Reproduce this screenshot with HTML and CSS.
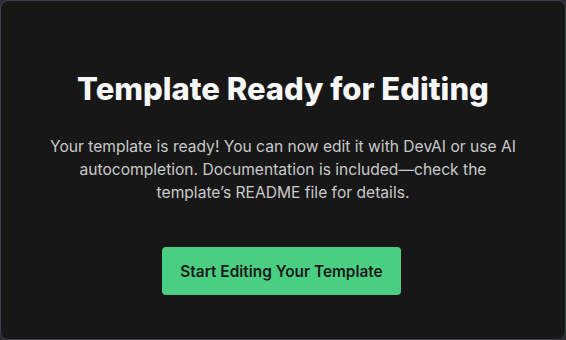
FILE: index.html
```html
<!DOCTYPE html>
<html lang="en">

<head>
    <meta charset="UTF-8">
    <meta name="viewport" content="width=device-width, initial-scale=1.0">
    <title>Template Ready</title>
    <link rel="stylesheet" href="styles.css">
</head>

<body>
    <div class="card">
        <h1 class="title">Template Ready for Editing</h1>
        <p class="text">Your template is ready! You can now edit it with DevAI or use AI autocompletion. Documentation is included—check the template’s README file for details.</p>
        <button class="start">Start Editing Your Template</button>
    </div>
</body>

</html>
```

FILE: styles.css
```css
html,
body {
    margin: 0;
    padding: 0;
    height: 100%;
    background-color: #2a2c33;
}

.card {
    box-sizing: border-box;
    height: 100%;
    display: flex;
    flex-direction: column;
    align-items: center;
    padding: 70px 40px 0;
    background-color: #171717;
    border: 1px solid #3d4049;
    border-radius: 8px;
    font-family: Inter, "Noto Sans", sans-serif;
    text-align: center;
}

.title {
    margin: 0;
    font-size: 31px;
    line-height: 36px;
    font-weight: 800;
    color: #f7f7f7;
}

.text {
    margin: 28px 0 0;
    max-width: 466px;
    font-size: 15.6px;
    line-height: 23px;
    color: #c9c9c9;
}

.start {
    margin-top: 43px;
    margin-right: 3px;
    width: 239px;
    height: 48px;
    border: none;
    border-radius: 4px;
    background-color: #4ace82;
    color: #1a1a1a;
    font-family: inherit;
    font-size: 15.4px;
    font-weight: 600;
}
```
